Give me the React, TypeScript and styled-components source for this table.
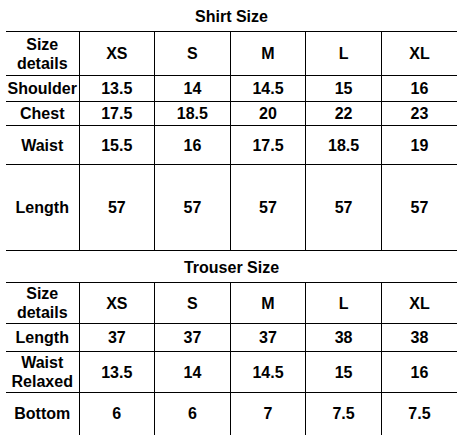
import React from 'react';
import styled, { createGlobalStyle } from 'styled-components';

interface SizeRow {
    label: string;
    values: string[];
    height: number;
}

interface SizeTableProps {
    title: string;
    rows: SizeRow[];
    headerHeight: number;
    open?: boolean;
}

const sizes = ['XS', 'S', 'M', 'L', 'XL'];

const shirtRows: SizeRow[] = [
    { label: 'Shoulder', values: ['13.5', '14', '14.5', '15', '16'], height: 26 },
    { label: 'Chest', values: ['17.5', '18.5', '20', '22', '23'], height: 24 },
    { label: 'Waist', values: ['15.5', '16', '17.5', '18.5', '19'], height: 39 },
    { label: 'Length', values: ['57', '57', '57', '57', '57'], height: 86 },
];

const trouserRows: SizeRow[] = [
    { label: 'Length', values: ['37', '37', '37', '38', '38'], height: 28 },
    { label: 'Waist Relaxed', values: ['13.5', '14', '14.5', '15', '16'], height: 41 },
    { label: 'Bottom', values: ['6', '6', '7', '7.5', '7.5'], height: 42 },
];

const GlobalStyle = createGlobalStyle`
    body {
        margin: 0;
        background: #fff;
        font-family: "Liberation Sans", Arial, sans-serif;
        color: #000;
    }
`;

const Page = styled('div')`
    width: 451px;
    padding-left: 6px;
`;

const Table = styled('table')<{ open?: boolean }>`
    width: 451px;
    border-collapse: collapse;
    table-layout: fixed;
    font-size: 16px;
    font-weight: bold;
    line-height: 19px;
    text-align: center;

    tr:last-child td {
        border-bottom: ${({ open }) => (open ? 'none' : '1px solid #000')};
    }
`;

const Caption = styled('caption')`
    height: 31px;
    line-height: 33px;
    font-size: 16px;
    font-weight: bold;
`;

const Row = styled('tr')<{ h: number }>`
    height: ${({ h }) => h}px;
`;

const Cell = styled('td')`
    padding: 0;
    border-top: 1px solid #000;
    border-left: 1px solid #000;
    vertical-align: middle;

    &:first-child {
        border-left: none;
    }
`;

const LabelCol = styled('col')`
    width: 73px;
`;

const SizeTable: React.FC<SizeTableProps> = ({ title, rows, headerHeight, open }) => (
    <Table open={open}>
        <Caption>{title}</Caption>
        <colgroup>
            <LabelCol />
            {sizes.map((s) => (
                <col key={s} />
            ))}
        </colgroup>
        <tbody>
            <Row h={headerHeight}>
                <Cell>
                    Size
                    <br />
                    details
                </Cell>
                {sizes.map((s) => (
                    <Cell key={s}>{s}</Cell>
                ))}
            </Row>
            {rows.map((row) => (
                <Row key={row.label} h={row.height}>
                    <Cell>
                        {row.label.split(' ').map((word, i) => (
                            <React.Fragment key={word}>
                                {i > 0 && <br />}
                                {word}
                            </React.Fragment>
                        ))}
                    </Cell>
                    {row.values.map((v, i) => (
                        <Cell key={i}>{v}</Cell>
                    ))}
                </Row>
            ))}
        </tbody>
    </Table>
);

export default function App() {
    return (
        <>
            <GlobalStyle />
            <Page>
                <SizeTable title="Shirt Size" rows={shirtRows} headerHeight={44} />
                <SizeTable title="Trouser Size" rows={trouserRows} headerHeight={41} open />
            </Page>
        </>
    );
}
